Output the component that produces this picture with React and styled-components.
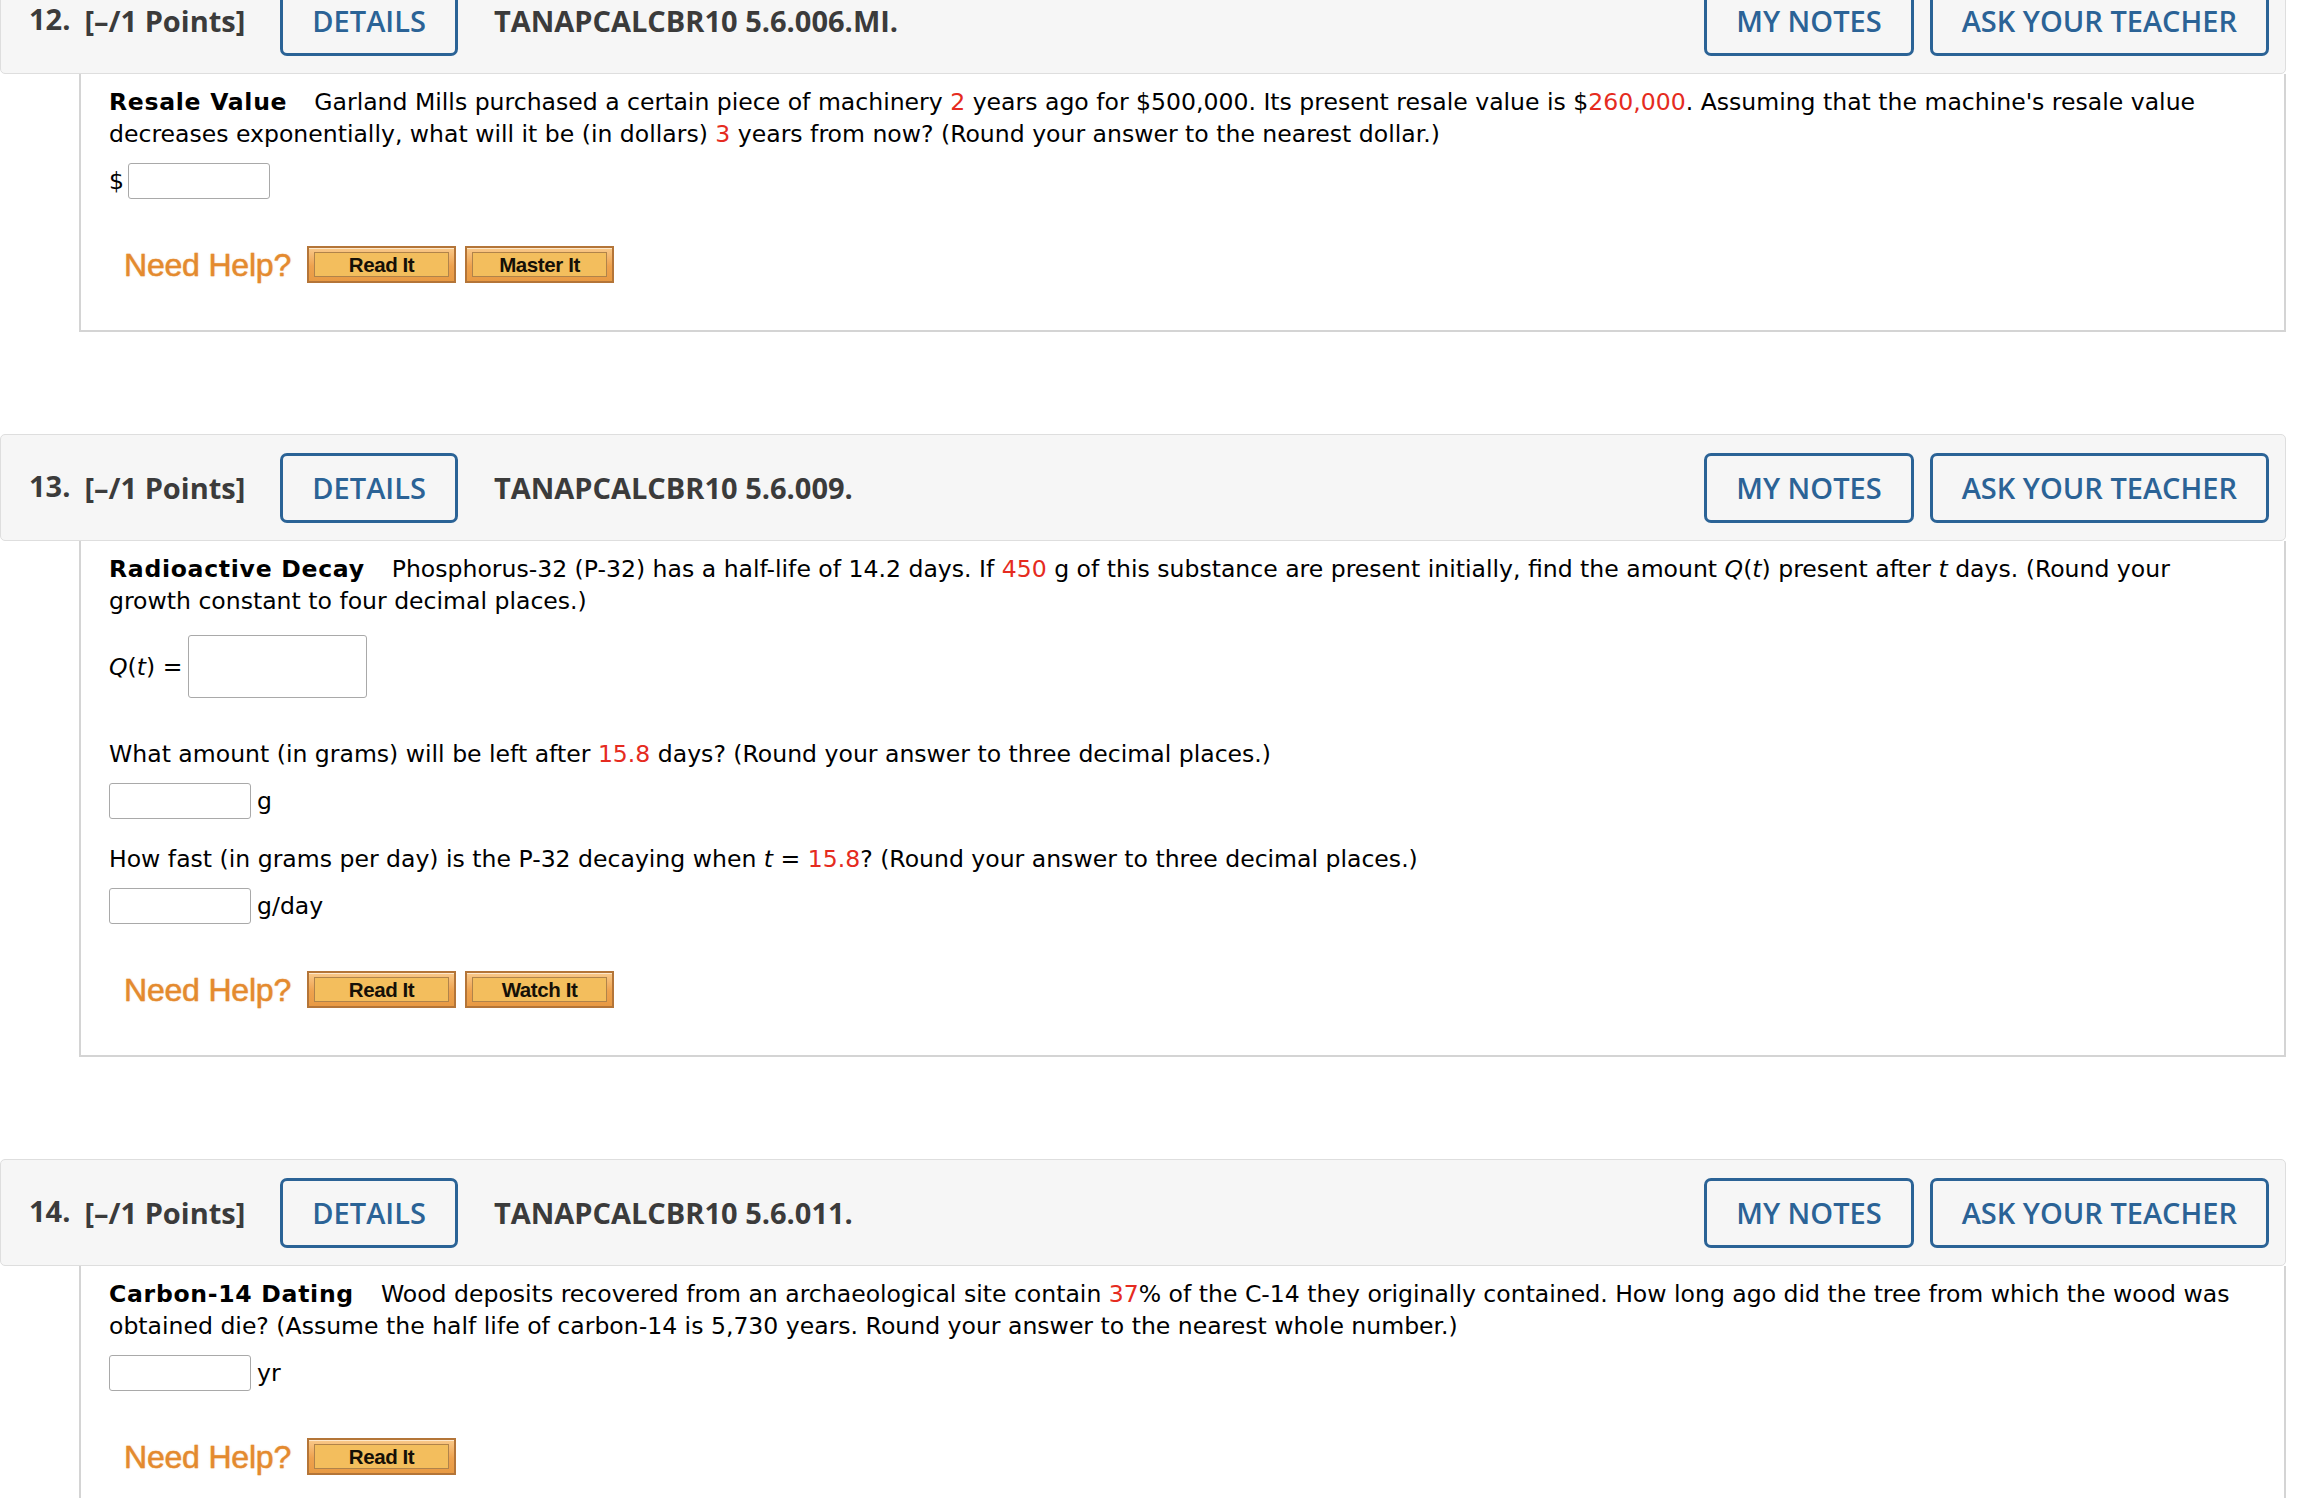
import React from "react";
import styled, { createGlobalStyle } from "styled-components";

const GlobalStyle = createGlobalStyle`
  html, body { margin: 0; padding: 0; background: #ffffff; }
  body { font-family: "DejaVu Sans", Verdana, sans-serif; overflow: hidden; }
  #root { width: 2300px; position: relative; }
`;

const Page = styled.main`
  width: 2286px;
  margin-top: -33px;
  display: flex;
  flex-direction: column;
  gap: 102px;
`;

const Question = styled.section`
  display: flex;
  flex-direction: column;
`;

const Header = styled.header`
  display: flex;
  align-items: center;
  height: 107px;
  box-sizing: border-box;
  padding: 0 16px 0 28px;
  background: #f6f6f6;
  border: 1px solid #dedede;
  border-radius: 5px;
  font-family: "Open Sans", sans-serif;
  font-weight: 700;
  font-size: 29px;
  color: #3b3b3b;
`;

const Num = styled.span`
  margin-right: 14px;
  position: relative;
  top: -2px;
`;

const Points = styled.span`
  margin-right: 35px;
`;

const OutlineButton = styled.button`
  height: 70px;
  box-sizing: border-box;
  padding: 0 29px;
  border: 3px solid #2b6396;
  border-radius: 7px;
  background: transparent;
  color: #2b6396;
  font-family: "Open Sans", sans-serif;
  font-weight: 600;
  font-size: 29px;
  cursor: pointer;
`;

const Code = styled.span`
  margin-left: 36px;
  flex: 1;
`;

const Actions = styled.div`
  display: flex;
  gap: 16px;
`;

const Body = styled.div`
  margin-left: 79px;
  border: 2px solid #d4d4d4;
  border-top: none;
  padding: 12px 40px 47px 28px;
  font-size: 23.55px;
  line-height: 32px;
  color: #000;
  background: transparent;
`;

const Prompt = styled.p`
  margin: ${(p) => p.$top || 0}px 0 0;
`;

const Title = styled.b`
  margin-right: 27px;
  letter-spacing: 0.7px;
`;

const Red = styled.span`
  color: #e52b20;
`;

const Var = styled.i`
  font-style: italic;
`;

const AnswerRow = styled.div`
  display: flex;
  align-items: center;
  gap: ${(p) => p.$gap || 6}px;
  margin-top: ${(p) => p.$top || 13}px;
`;

const Field = styled.span`
  display: inline-block;
  width: ${(p) => p.$w || 142}px;
  height: ${(p) => p.$h || 36}px;
  box-sizing: border-box;
  border: 1.5px solid #a9a9a9;
  border-radius: 3px;
  background: #fff;
`;

const HelpRow = styled.div`
  display: flex;
  align-items: center;
  margin-top: 47px;
  padding-left: 15px;
  height: 37px;
`;

const NeedHelp = styled.span`
  font-family: "Liberation Sans", Arial, sans-serif;
  font-size: 32px;
  color: #e48a2e;
  margin-right: 16px;
  letter-spacing: -0.2px;
  -webkit-text-stroke: 0.4px #e48a2e;
  text-shadow: 0 0 1.5px rgba(228, 138, 46, 0.55);
`;

const HelpButtons = styled.div`
  display: flex;
  gap: 9px;
`;

const HelpButton = styled.span`
  display: flex;
  width: 149px;
  height: 37px;
  box-sizing: border-box;
  padding: 4px 5px;
  border: 2px solid #b47538;
  background: linear-gradient(#f9c98a, #eea24e 55%, #e89a44);
  box-shadow: inset 0 1px 0 rgba(255, 240, 220, 0.8);
`;

const HelpInner = styled.span`
  flex: 1;
  display: flex;
  align-items: center;
  justify-content: center;
  border: 1.5px solid #b0834a;
  background: #f3be5d;
  font-family: "Liberation Sans", Arial, sans-serif;
  font-weight: 700;
  font-size: 20.5px;
  color: #151007;
  letter-spacing: -0.4px;
`;

const BottomFade = styled.div`
  position: fixed;
  left: 0;
  right: 0;
  bottom: 0;
  height: 110px;
  z-index: -1;
  pointer-events: none;
  background: linear-gradient(rgba(240, 240, 240, 0), #ebebeb);
`;

function QHeader({ num, code }) {
  return (
    <Header>
      <Num>{num}.</Num>
      <Points>[–/1 Points]</Points>
      <OutlineButton>DETAILS</OutlineButton>
      <Code>{code}</Code>
      <Actions>
        <OutlineButton>MY NOTES</OutlineButton>
        <OutlineButton>ASK YOUR TEACHER</OutlineButton>
      </Actions>
    </Header>
  );
}

function Help({ items }) {
  return (
    <HelpRow>
      <NeedHelp>Need Help?</NeedHelp>
      <HelpButtons>
        {items.map((t) => (
          <HelpButton key={t}>
            <HelpInner>{t}</HelpInner>
          </HelpButton>
        ))}
      </HelpButtons>
    </HelpRow>
  );
}

export default function App() {
  return (
    <>
      <GlobalStyle />
      <BottomFade />
      <Page>
        <Question>
          <QHeader num="12" code="TANAPCALCBR10 5.6.006.MI." />
          <Body>
            <Prompt>
              <Title>Resale Value</Title>Garland Mills purchased a certain piece of machinery{" "}
              <Red>2</Red> years ago for $500,000. Its present resale value is $<Red>260,000</Red>.
              Assuming that the machine's resale value decreases exponentially, what will it be (in
              dollars) <Red>3</Red> years from now? (Round your answer to the nearest dollar.)
            </Prompt>
            <AnswerRow $gap={4}>
              <span>$</span>
              <Field />
            </AnswerRow>
            <Help items={["Read It", "Master It"]} />
          </Body>
        </Question>

        <Question>
          <QHeader num="13" code="TANAPCALCBR10 5.6.009." />
          <Body>
            <Prompt>
              <Title>Radioactive Decay</Title>Phosphorus-32 (P-32) has a half-life of 14.2 days. If{" "}
              <Red>450</Red> g of this substance are present initially, find the amount{" "}
              <Var>Q</Var>(<Var>t</Var>) present after <Var>t</Var> days. (Round your growth
              constant to four decimal places.)
            </Prompt>
            <AnswerRow $top={18} $gap={6}>
              <span>
                <Var>Q</Var>(<Var>t</Var>) =
              </span>
              <Field $w={179} $h={63} />
            </AnswerRow>
            <Prompt $top={40}>
              What amount (in grams) will be left after <Red>15.8</Red> days? (Round your answer to
              three decimal places.)
            </Prompt>
            <AnswerRow>
              <Field />
              <span>g</span>
            </AnswerRow>
            <Prompt $top={24}>
              How fast (in grams per day) is the P-32 decaying when <Var>t</Var> = <Red>15.8</Red>?
              (Round your answer to three decimal places.)
            </Prompt>
            <AnswerRow>
              <Field />
              <span>g/day</span>
            </AnswerRow>
            <Help items={["Read It", "Watch It"]} />
          </Body>
        </Question>

        <Question>
          <QHeader num="14" code="TANAPCALCBR10 5.6.011." />
          <Body>
            <Prompt>
              <Title>Carbon-14 Dating</Title>Wood deposits recovered from an archaeological site
              contain <Red>37</Red>% of the C-14 they originally contained. How long ago did the tree
              from which the wood was obtained die? (Assume the half life of carbon-14 is 5,730
              years. Round your answer to the nearest whole number.)
            </Prompt>
            <AnswerRow>
              <Field />
              <span>yr</span>
            </AnswerRow>
            <Help items={["Read It"]} />
          </Body>
        </Question>
      </Page>
    </>
  );
}
